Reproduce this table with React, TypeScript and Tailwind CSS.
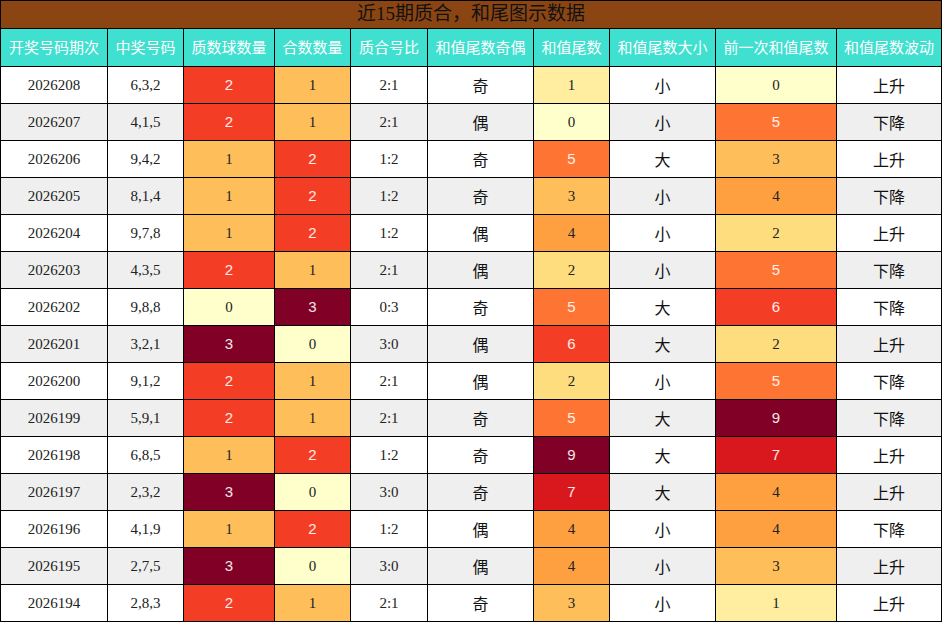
const cols = [106, 75, 90, 75, 76, 105, 75, 105, 120, 104]
const heads = ['开奖号码期次', '中奖号码', '质数球数量', '合数数量', '质合号比', '和值尾数奇偶', '和值尾数', '和值尾数大小', '前一次和值尾数', '和值尾数波动']

// period, numbers, prime, composite, ratio, odd/even, tail, size, prev tail, trend
const rows: [string, string, number, number, string, string, number, string, number, string][] = [
  ['2026208', '6,3,2', 2, 1, '2:1', '奇', 1, '小', 0, '上升'],
  ['2026207', '4,1,5', 2, 1, '2:1', '偶', 0, '小', 5, '下降'],
  ['2026206', '9,4,2', 1, 2, '1:2', '奇', 5, '大', 3, '上升'],
  ['2026205', '8,1,4', 1, 2, '1:2', '奇', 3, '小', 4, '下降'],
  ['2026204', '9,7,8', 1, 2, '1:2', '偶', 4, '小', 2, '上升'],
  ['2026203', '4,3,5', 2, 1, '2:1', '偶', 2, '小', 5, '下降'],
  ['2026202', '9,8,8', 0, 3, '0:3', '奇', 5, '大', 6, '下降'],
  ['2026201', '3,2,1', 3, 0, '3:0', '偶', 6, '大', 2, '上升'],
  ['2026200', '9,1,2', 2, 1, '2:1', '偶', 2, '小', 5, '下降'],
  ['2026199', '5,9,1', 2, 1, '2:1', '奇', 5, '大', 9, '下降'],
  ['2026198', '6,8,5', 1, 2, '1:2', '奇', 9, '大', 7, '上升'],
  ['2026197', '2,3,2', 3, 0, '3:0', '奇', 7, '大', 4, '上升'],
  ['2026196', '4,1,9', 1, 2, '1:2', '偶', 4, '小', 4, '下降'],
  ['2026195', '2,7,5', 3, 0, '3:0', '偶', 4, '小', 3, '上升'],
  ['2026194', '2,8,3', 2, 1, '2:1', '奇', 3, '小', 1, '上升'],
]

// heat scale for tails 0-9
const tailBg = ['bg-[#ffffcc]', 'bg-[#ffeda0]', 'bg-[#fedd7f]', 'bg-[#febf5a]', 'bg-[#fe9f40]', 'bg-[#fe7433]', 'bg-[#f43d25]', 'bg-[#d9181e]', 'bg-[#b10026]', 'bg-[#800026]']
// heat scale for counts 0-3
const cntBg = ['bg-[#ffffcc]', 'bg-[#febf5a]', 'bg-[#f43d25]', 'bg-[#800026]']

const serif = 'font-["Liberation_Serif","Noto_Sans_CJK_SC",serif]'
const sans = 'font-["Noto_Sans_CJK_SC","Noto_Sans",sans-serif]'
const thin = 'font-["Liberation_Sans",sans-serif]'

function Num({ v, bg, light }: { v: number; bg: string; light: boolean }) {
  return (
    <div className={`${bg} flex items-center justify-center text-[15px] ${light ? `text-white/90 ${thin}` : `text-[#222] ${serif}`}`}>
      {v}
    </div>
  )
}

export default function App() {
  return (
    <div className="w-[942px] h-[622px] bg-black p-px flex flex-col gap-px">
      <div className={`h-[27px] bg-[#8b4513] flex items-center justify-center text-[19px] text-[#111] ${serif}`}>
        近15期质合，和尾图示数据
      </div>
      <div
        className="grid gap-px"
        style={{ gridTemplateColumns: cols.map(c => c + 'px').join(' ') }}
      >
        {heads.map(h => (
          <div key={h} className={`h-[37px] bg-[#40e0d0] text-white text-[15px] flex items-center justify-center ${sans}`}>{h}</div>
        ))}
        {rows.map((r, i) => {
          const bg = i % 2 ? 'bg-[#efefef]' : 'bg-white'
          const plain = `${bg} h-[36px] flex items-center justify-center text-[15px] text-[#222] ${serif}`
          const cjk = `${bg} h-[36px] flex items-center justify-center text-[16px] text-[#111] ${sans}`
          return [
            <div key={i + 'a'} className={plain}>{r[0]}</div>,
            <div key={i + 'b'} className={plain}>{r[1]}</div>,
            <Num key={i + 'c'} v={r[2]} bg={cntBg[r[2]]} light={r[2] >= 2} />,
            <Num key={i + 'd'} v={r[3]} bg={cntBg[r[3]]} light={r[3] >= 2} />,
            <div key={i + 'e'} className={plain}>{r[4]}</div>,
            <div key={i + 'f'} className={cjk}>{r[5]}</div>,
            <Num key={i + 'g'} v={r[6]} bg={tailBg[r[6]]} light={r[6] >= 5} />,
            <div key={i + 'h'} className={cjk}>{r[7]}</div>,
            <Num key={i + 'i'} v={r[8]} bg={tailBg[r[8]]} light={r[8] >= 5} />,
            <div key={i + 'j'} className={cjk}>{r[9]}</div>,
          ]
        })}
      </div>
    </div>
  )
}
